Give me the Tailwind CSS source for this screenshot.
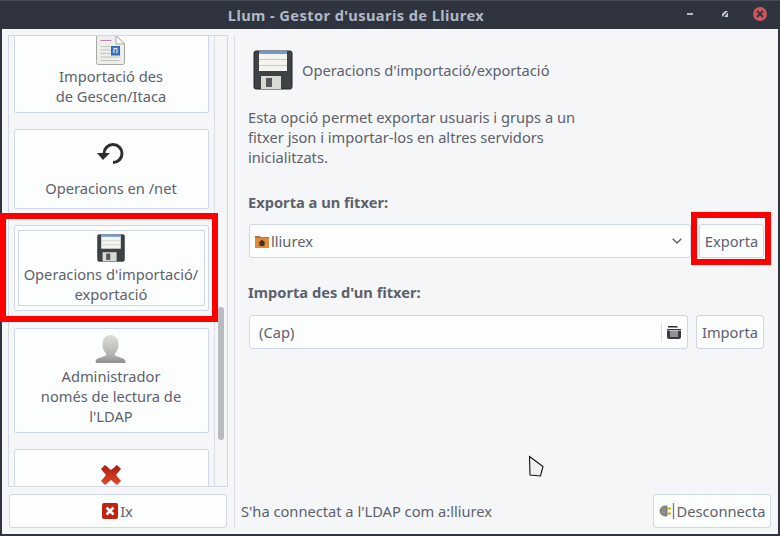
<!DOCTYPE html>
<html lang="ca">
<head>
<meta charset="UTF-8">
<title>Llum - Gestor d'usuaris de Lliurex</title>
<script src="https://cdn.jsdelivr.net/npm/@tailwindcss/browser@4"></script>
</head>
<body class="m-0 overflow-hidden">
<div class="relative w-[780px] h-[536px] flex flex-col bg-[#2f343f] font-['Noto_Sans',sans-serif] text-[14.67px] leading-[20px] text-[#5c616c] overflow-hidden">

  <!-- Title bar -->
  <header class="relative h-[29px] shrink-0 border-t border-[#474c57] flex items-center justify-center pr-[68px]">
    <h1 class="font-bold text-[14.67px] tracking-[0.4px] text-[#afb8c6]">Llum - Gestor d'usuaris de Lliurex</h1>
    <div class="absolute right-0 top-0 h-[28px] w-[100px]">
      <span class="absolute left-[7px] top-[12px] w-[6px] h-[2px] bg-[#b6bcc8]"></span>
      <svg class="absolute left-[42px] top-[10px] w-[6px] h-[6px]" viewBox="0 0 6 6"><path d="M0 3 3 0h3v0L0 6zM6 1.500V6H2z" fill="#c3c8d2"/></svg>
      <span class="absolute left-[73px] top-[6px] w-[14px] h-[14px] rounded-full bg-[#cc575d] flex items-center justify-center">
        <svg class="w-[8px] h-[8px]" viewBox="0 0 8 8"><path d="M1 1l6 6M7 1 1 7" stroke="#2f343f" stroke-width="1.800"/></svg>
      </span>
    </div>
  </header>

  <!-- Window body -->
  <div class="flex flex-1 mx-[2px] mb-[2px] bg-[#f5f6f7] min-h-0">

    <!-- Left column -->
    <div class="w-[232px] shrink-0 pt-[6px] pl-[6px]">
      <div class="w-[220px] h-[452px] border border-[#d3d8e2] flex overflow-hidden">
        <div class="w-[205px] shrink-0 pl-[5px] mt-[-23px]">

          <div class="h-[100px] w-[195px] bg-[#fcfdfd] border border-[#cfd6e6] rounded-[2px] flex flex-col items-center pt-[3px] pr-px text-center">
            <svg class="w-[32px] h-[48px] shrink-0" viewBox="0 0 32 48">
              <path d="M3.500 18.500H21L29.500 27V45.500a2 2 0 0 1-2 2h-24a2 2 0 0 1-2-2V18.500z" fill="#eeeeea" stroke="#a8a8a6"/>
              <path d="M21 18.500V27h8.500z" fill="#fafafa" stroke="#a8a8a6"/>
              <path d="M5.500 23.500h11" stroke="#b77fb4"/>
              <path d="M5.500 29.500h10M5.500 33h10M5.500 36.500h10M5.500 40h19M5.500 43.500h19" stroke="#c2c2be"/>
              <rect x="16.500" y="29.500" width="8" height="8.500" fill="#3f7cc4" stroke="#2d64a8"/>
              <path d="M19 36v-4.500h3V36" fill="none" stroke="#e8f0fa"/>
            </svg>
            <span class="mt-px">Importació des<br>de Gescen/Itaca</span>
          </div>

          <div class="mt-[16px] h-[80px] w-[195px] bg-[#fcfdfd] border border-[#cfd6e6] rounded-[2px] flex flex-col items-center pt-[13px] pr-px text-center">
            <svg class="w-[26px] h-[23px] shrink-0 overflow-visible" viewBox="0 0 26 23">
              <path d="M6 10.500A9 9 0 1 1 15 19.500" fill="none" stroke="#2e2e2e" stroke-width="3"/>
              <path d="M-1 10H12L5 17z" fill="#2e2e2e"/>
            </svg>
            <span class="mt-[12px]">Operacions en /net</span>
          </div>

          <div class="mt-[16px] h-[86px] w-[195px] bg-[#fcfdfd] border border-[#cfd6e6] rounded-[2px] px-[3px] py-[4px]">
            <div class="h-[76px] border border-[#cfd6e6] flex flex-col items-center pt-[3px] pr-px text-center">
              <svg class="w-[28px] h-[28px] shrink-0" viewBox="0 0 40 40">
                <path d="M1 3a2 2 0 0 1 2-2h34a2 2 0 0 1 2 2v34a2 2 0 0 1-2 2H3a2 2 0 0 1-2-2z" fill="#3f4245" stroke="#232527"/>
                <rect x="6" y="1" width="28" height="20" fill="#f3f3f0"/>
                <rect x="6" y="1" width="28" height="3" fill="#6a9bd3"/>
                <path d="M6 9.500h28M6 15.500h28" stroke="#c9c9c6"/>
                <rect x="8" y="26" width="20" height="13" fill="#d9d9d6"/>
                <rect x="13" y="28" width="6" height="9" fill="#55585a"/>
              </svg>
              <span class="mt-[2px]">Operacions d'importació/<br>exportació</span>
            </div>
          </div>

          <div class="mt-[17px] h-[105px] w-[195px] bg-[#fcfdfd] border border-[#cfd6e6] rounded-[2px] flex flex-col items-center pt-[6px] pr-px text-center">
            <svg class="w-[30px] h-[28px] shrink-0 overflow-visible" viewBox="0 0 30 28">
              <defs><linearGradient id="userFill" x1="0" y1="0" x2="0" y2="1"><stop offset="0" stop-color="#dcdcda"/><stop offset=".7" stop-color="#b4b4b2"/><stop offset="1" stop-color="#8e8e8c"/></linearGradient></defs>
              <path d="M14.500 0c5 0 8 4 8 9.500 0 4-1.500 7-3.500 9v2c3 1.500 9.500 2.500 10.500 5.500l-.5 2H0l-.5-2c1-3 7.500-4 10.500-5.500v-2c-2-2-3.500-5-3.500-9 0-5.500 3-9.500 8-9.500z" fill="url(#userFill)"/>
            </svg>
            <span class="mt-[3px]">Administrador<br>només de lectura de<br>l'LDAP</span>
          </div>

          <div class="mt-[16px] h-[60px] w-[195px] bg-[#fcfdfd] border border-[#cfd6e6] rounded-[2px] flex flex-col items-center pt-[15px] pr-[2px]">
            <svg class="w-[20px] h-[20px] shrink-0" viewBox="0 0 20 20">
              <defs><linearGradient id="redX" x1="0" y1="0" x2="0" y2="1"><stop offset="0" stop-color="#a81c10"/><stop offset="1" stop-color="#e04a2c"/></linearGradient></defs>
              <path d="M4 0l6 5 6-5 4 4-5 6 5 6-4 4-6-5-6 5-4-4 5-6-5-6z" fill="url(#redX)"/>
            </svg>
          </div>
        </div>

        <!-- Scrollbar gutter -->
        <div class="w-[14px] shrink-0 border-l border-[#d9dde5] pl-[3px] pt-[271px]">
          <div class="w-[6px] h-[133px] rounded-[3px] bg-[#b8bbc0]"></div>
        </div>
      </div>

      <button class="mt-[7px] ml-[1px] w-[218px] h-[34px] bg-[#fcfdfd] border border-[#cfd6e6] rounded-[3px] flex items-center justify-center gap-[2px] pr-px">
        <svg class="w-[16px] h-[16px]" viewBox="0 0 16 16">
          <rect width="16" height="16" rx="2" fill="#c0230f"/>
          <path d="M4.500 4.500l7 7M11.500 4.500l-7 7" stroke="#fff" stroke-width="2.600"/>
        </svg>
        Ix
      </button>
    </div>

    <!-- Right column -->
    <div class="flex-1 my-[6px] border-l border-[#d9dde5] pl-[13px] pr-[7px] flex flex-col min-w-0">
      <div class="flex items-center gap-[9px] ml-[5px] mt-[15px] h-[40px]">
        <svg class="w-[40px] h-[40px] shrink-0" viewBox="0 0 40 40">
          <path d="M1 3a2 2 0 0 1 2-2h34a2 2 0 0 1 2 2v34a2 2 0 0 1-2 2H3a2 2 0 0 1-2-2z" fill="#3f4245" stroke="#232527"/>
          <rect x="6" y="1" width="28" height="20" fill="#f3f3f0"/>
          <rect x="6" y="1" width="28" height="3" fill="#6a9bd3"/>
          <path d="M6 9.500h28M6 15.500h28" stroke="#c9c9c6"/>
          <rect x="8" y="26" width="20" height="13" fill="#d9d9d6"/>
          <rect x="13" y="28" width="6" height="9" fill="#55585a"/>
        </svg>
        <span>Operacions d'importació/exportació</span>
      </div>

      <p class="mt-[17px]">Esta opció permet exportar usuaris i grups a un<br>fitxer json i importar-los en altres servidors<br>inicialitzats.</p>

      <h2 class="mt-[25px] font-bold">Exporta a un fitxer:</h2>
      <div class="mt-[12px] flex h-[34px] pl-[1px]">
        <div class="w-[442px] bg-[#fcfdfd] border border-[#cfd6e6] rounded-[3px] flex items-center pl-[4px] pr-[8px]">
          <svg class="w-[16px] h-[16px] shrink-0" viewBox="0 0 16 16">
            <path d="M1 3h5l1 1h8v2H1z" fill="#a8784a"/>
            <rect x="1" y="5" width="14" height="10" fill="#e08a3c"/>
            <path d="M8 6.500 11.500 10H10.500v3h-5v-3H4.500z" fill="#4a3020"/>
          </svg>
          <span class="ml-[1px] flex-1">lliurex</span>
          <svg class="w-[10px] h-[6px]" viewBox="0 0 10 6"><path d="M.7.7 5 5 9.300.7" fill="none" stroke="#5c616c" stroke-width="1.400"/></svg>
        </div>
        <button class="ml-[8px] w-[65px] bg-[#fcfdfd] border border-[#cfd6e6] rounded-[3px]">Exporta</button>
      </div>

      <h2 class="mt-[24px] font-bold">Importa des d'un fitxer:</h2>
      <div class="mt-[13px] flex h-[34px] pl-[1px]">
        <div class="w-[439px] bg-[#fcfdfd] border border-[#cfd6e6] rounded-[3px] flex items-center pl-[9px] pr-[6px]">
          <span class="flex-1">(Cap)</span>
          <span class="w-px h-[19px] bg-[#d9dde5]"></span>
          <svg class="ml-[5px] w-[14px] h-[13px]" viewBox="0 0 14 13">
            <path d="M1 0h9l1 1.500H1zM0 3h14v1H0z" fill="#2e3138"/>
            <path d="M0 4.500h3V11h8v2H2a2 2 0 0 1-2-2zM11 4.500h3V11a2 2 0 0 1-2 2h-1z" fill="#3a3d44"/>
            <rect x="3" y="4.500" width="8" height="6.500" fill="#8f9298"/>
          </svg>
        </div>
        <button class="ml-[8px] w-[68px] bg-[#fcfdfd] border border-[#cfd6e6] rounded-[3px]">Importa</button>
      </div>

      <div class="mt-auto flex items-center justify-between h-[34px]">
        <span class="-ml-[7px]">S'ha connectat a l'LDAP com a:lliurex</span>
        <button class="w-[118px] h-[34px] bg-[#fcfdfd] border border-[#cfd6e6] rounded-[3px] flex items-center justify-center gap-[2px]">
          <svg class="w-[16px] h-[16px] shrink-0" viewBox="0 0 16 16">
            <path d="M8 3H6a5 5 0 0 0 0 10h2z" fill="#8b8d8a" stroke="#5f615e" stroke-width=".7"/>
            <path d="M8 5.500H12M8 10.500H12" stroke="#d4a90a" stroke-width="2"/>
            <path d="M14.500 0v16" stroke="#77797a" stroke-width="1.300"/>
          </svg>
          Desconnecta
        </button>
      </div>
    </div>
  </div>

  <!-- Mouse pointer -->
  <svg class="absolute left-[528px] top-[455px] w-[17px] h-[23px]" viewBox="0 0 17 23">
    <path d="M1.500 1.500 15 11.500 12.500 21 2 20z" fill="#f0f0f0" stroke="#111" stroke-width="1.100"/>
  </svg>

  <!-- Red highlight boxes -->
  <div class="absolute left-0 top-[213px] w-[218px] h-[109px] border-[6px] border-[#ff0000]"></div>
  <div class="absolute left-[691px] top-[212px] w-[80px] h-[53px] border-[6px] border-[#ff0000]"></div>
</div>
</body>
</html>
